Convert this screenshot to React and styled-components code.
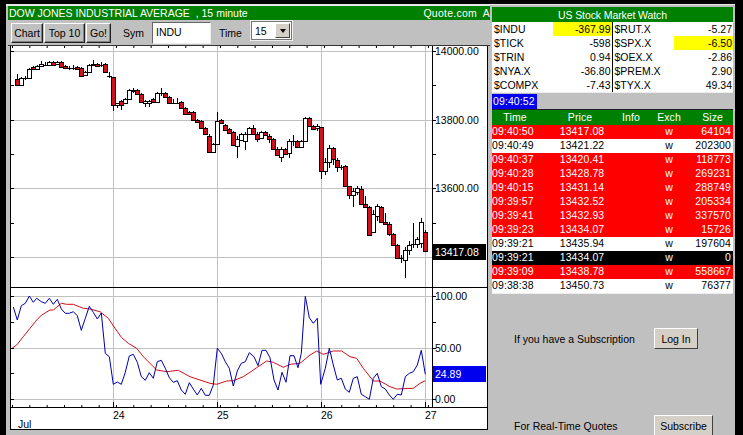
import React from "react"
import styled, { createGlobalStyle } from "styled-components"

const GlobalStyle = createGlobalStyle`
  html, body {
    margin: 0;
    padding: 0;
    background: #000;
    overflow: hidden;
  }
  * {
    box-sizing: border-box;
  }
`

const Page = styled.div`
  width: 743px;
  height: 435px;
  background: #000;
  padding: 4px 7px 0 6px;
  display: flex;
  align-items: flex-start;
  overflow: hidden;
  font-family: "Liberation Sans", Arial, sans-serif;
  font-size: 10.5px;
  color: #000;
`

const LeftColumn = styled.div`
  width: 485px;
  height: 431px;
  display: flex;
  flex-direction: column;
  background: #c0c0c0;
  border-top: 2px solid #e8e8e8;
  padding-left: 2px;
`

const TitleBar = styled.div`
  height: 14px;
  background: #008000;
  color: #fff;
  display: flex;
  justify-content: space-between;
  align-items: center;
  padding: 0 1px 0 1px;
  white-space: pre;
  line-height: 14px;
`

const TitleRight = styled.span`
  letter-spacing: 0.25px;
`

const Toolbar = styled.div`
  height: 26px;
  display: flex;
  align-items: flex-start;
  padding: 3px 0 0 3px;
  border-bottom: 1px solid #333;
`

const ToolButton = styled.button`
  width: ${props => props.$w}px;
  height: 20px;
  margin-right: 1px;
  padding: 0;
  background: #c0c0c0;
  border: 1px solid;
  border-color: #fff #222 #222 #fff;
  box-shadow: inset -1px -1px 0 #808080;
  font: 10.5px "Liberation Sans", Arial, sans-serif;
  color: #000;
`

const ToolLabel = styled.span`
  width: ${props => props.$w}px;
  padding-left: ${props => props.$left}px;
  line-height: 20px;
`

const SymbolBox = styled.div`
  width: 59px;
  height: 22px;
  margin-top: -1px;
  background: #fff;
  border: 1px solid;
  border-color: #666 #eee #eee #666;
  padding: 3px 0 0 3px;
  line-height: 13px;
`

const TimeSelect = styled.div`
  width: 41px;
  height: 19px;
  margin-top: -2px;
  background: #fff;
  border: 1px solid #777;
  outline: 1px solid #eee;
  display: flex;
  align-items: center;
  justify-content: space-between;
  padding-left: 3px;
`

const SelectArrow = styled.div`
  width: 15px;
  height: 15px;
  margin-right: 1px;
  background: #d4d0c8;
  border: 1px solid;
  border-color: #fff #444 #444 #fff;
  display: flex;
  align-items: center;
  justify-content: center;

  &::after {
    content: "";
    border: 3px solid transparent;
    border-top: 4px solid #000;
    border-bottom: 0;
  }
`

const ChartFrame = styled.div`
  width: 478px;
  height: 384px;
  margin-left: 2px;
  border: 1px solid #000;
  border-top: 0;
  background: #fff;
  display: flex;
  flex-direction: column;
`

const PriceSvg = styled.svg`
  display: block;
  width: 476px;
  height: 242px;
  border-bottom: 1px solid #000;
  flex: none;
`

const OscSvg = styled.svg`
  display: block;
  width: 476px;
  height: 141px;
  flex: none;
`

const AxisText = styled.text`
  font: 10.5px "Liberation Sans", Arial, sans-serif;
  fill: ${props => props.$fill || "#000"};
`

const RightColumn = styled.div`
  width: 245px;
  height: 431px;
  margin-left: -1px;
  display: flex;
  flex-direction: column;
  background: #c0c0c0;
  border-top: 1px solid #e8e8e8;
  padding: 2px 2px 0 2px;
`

const WatchTitle = styled.div`
  height: 15px;
  background: #008000;
  color: #fff;
  text-align: center;
  letter-spacing: -0.1px;
  line-height: 17px;
`

const WatchGrid = styled.div`
  display: grid;
  grid-template-columns: 1fr 1fr;
  background: #fff;
  border-bottom: 1px solid #eee;
`

const WatchCell = styled.div`
  height: 14px;
  display: flex;
  justify-content: space-between;
  line-height: 14px;
  border-right: ${props => (props.$divided ? "1px solid #000" : "none")};
`

const WatchName = styled.span`
  padding-left: 2px;
`

const WatchValue = styled.span`
  width: 59px;
  text-align: right;
  padding-right: 1px;
  background: ${props => (props.$hot ? "#ffff00" : "transparent")};
`

const ClockRow = styled.div`
  height: 17px;
  padding-top: 1px;
  border-bottom: 1px solid #222;
`

const Clock = styled.div`
  width: 45px;
  height: 15px;
  background: #0000ee;
  color: #fff;
  padding-left: 1px;
  line-height: 15px;
  letter-spacing: 0.1px;
`

const TradeRow = styled.div`
  display: grid;
  grid-template-columns: 46px 84px 18px 51px 42px;
  height: 14px;
  line-height: 13px;
  white-space: nowrap;
  background: ${props => props.$bg};
  color: ${props => props.$fg};
`

const HeadRow = styled(TradeRow)`
  height: 15px;
  line-height: 15px;
`

const TradeCell = styled.span`
  text-align: ${props => props.$align || "center"};
  padding-right: ${props => props.$pad || 0}px;
  padding-left: ${props => props.$lead || 0}px;
  letter-spacing: 0.1px;
`

const TradeList = styled.div`
  border-bottom: 1px solid #eee;
`

const AccessPanel = styled.div`
  display: flex;
  flex-direction: column;
  padding: 34px 0 0 22px;
`

const AccessRow = styled.div`
  display: flex;
  align-items: center;
  height: 21px;
  margin-bottom: ${props => props.$gap || 0}px;
`

const AccessText = styled.span`
  width: 140px;
  white-space: nowrap;
`

const AccessButton = styled.button`
  width: ${props => props.$w}px;
  height: 21px;
  padding: 0;
  background: #d4d0c8;
  border: 1px solid;
  border-color: #fff #404040 #404040 #fff;
  font: 10.5px "Liberation Sans", Arial, sans-serif;
  color: #000;
`

const bars = [
  [79, 85, 1, 74], [78, 85, 0], [78, 78, 0, 76, 80], [69, 78, 0], [67, 69, 1], [66, 69, 0],
  [64, 66, 0, 61], [65, 65, 0, 62], [62, 65, 0], [62, 65, 1], [62, 64, 0], [62, 67, 1],
  [66, 68, 1], [68, 68, 0, 66, 70], [68, 68, 0, 65, 70], [67, 69, 1], [68, 76, 1], [72, 75, 0],
  [65, 72, 0], [64, 65, 0, 60], [64, 66, 1], [65, 65, 0, 62, 67], [64, 72, 1], [76, 76, 0, 72, 78],
  [77, 105, 1, 77, 111], [103, 105, 0, 103, 108], [101, 105, 1, 100, 110], [99, 103, 0], [90, 99, 0], [90, 91, 0, 88, 93],
  [90, 94, 1], [94, 102, 1], [101, 103, 0, 100, 107], [101, 103, 0, 100, 107], [99, 102, 1], [93, 102, 0],
  [93, 93, 0, 88, 96], [93, 97, 1], [97, 103, 1], [103, 103, 0, 99, 104], [103, 103, 0, 98, 104], [102, 108, 1],
  [108, 114, 1], [112, 114, 1], [112, 120, 1], [120, 122, 1], [121, 128, 1], [128, 134, 1],
  [136, 152, 1, 134], [144, 152, 0], [121, 144, 0, 112], [120, 123, 1], [125, 130, 1], [129, 133, 1],
  [132, 145, 1], [139, 146, 0, 136, 158], [134, 140, 0], [134, 141, 0, 132, 150], [128, 134, 0], [128, 134, 1, 125],
  [134, 139, 1, 132, 142], [132, 138, 0], [132, 135, 1], [136, 139, 1, 134, 143], [139, 149, 1], [149, 155, 1, 147],
  [149, 157, 0, 147, 162], [149, 154, 1], [141, 153, 0, 139, 158], [141, 141, 0, 135, 146], [141, 147, 1], [141, 147, 0],
  [118, 141, 0], [118, 126, 1], [126, 129, 1], [126, 128, 0, 124, 131], [127, 171, 1, 127, 179], [162, 171, 0, 158, 175],
  [148, 162, 0, 145, 168], [148, 159, 1, 147, 165], [160, 167, 1, 158, 172], [167, 167, 0, 165, 170], [166, 186, 1], [186, 195, 1, 186, 199],
  [191, 195, 0, 188, 207], [188, 192, 0, 186, 195], [189, 204, 1, 186, 204], [204, 207, 1, 196], [207, 235, 1], [214, 232, 0, 210, 233],
  [206, 216, 0, 204, 221], [207, 222, 1], [222, 224, 1, 213], [224, 234, 1, 222, 236], [234, 245, 1], [245, 258, 1],
  [258, 258, 0, 255, 263], [250, 260, 0, 247, 278], [245, 250, 0, 241, 255], [244, 244, 0, 223, 248], [239, 244, 0, 237, 248], [222, 243, 0, 218, 248],
  [232, 251, 1, 230, 252],
]

const bluePoints = [
  [40, 66], [52, 105], [64, 62], [76, 55], [88, 33], [100, 52], [110, 40], [124, 50], [136, 55], [148, 40],
  [160, 58], [172, 43], [184, 72], [196, 85], [208, 85], [220, 80], [232, 92], [244, 136], [256, 100], [268, 64],
  [280, 82], [292, 102], [304, 84], [316, 205], [328, 215], [340, 298], [352, 291], [364, 298], [376, 262], [388, 213],
  [400, 208], [412, 232], [424, 275], [436, 286], [448, 263], [460, 280], [472, 230], [484, 226], [496, 250], [508, 278],
  [520, 292], [532, 287], [544, 315], [556, 328], [568, 293], [580, 312], [592, 330], [604, 310], [616, 331], [628, 331],
  [640, 300], [652, 190], [664, 205], [676, 230], [688, 250], [700, 303], [712, 258], [724, 235], [736, 230], [748, 203],
  [762, 215], [774, 242], [786, 196], [798, 196], [810, 218], [822, 285], [834, 315], [846, 262], [858, 292], [870, 212],
  [882, 212], [894, 248], [904, 205], [916, 34], [928, 98], [940, 115], [952, 100], [962, 298], [976, 250], [988, 190],
  [1000, 240], [1012, 285], [1024, 280], [1036, 312], [1048, 322], [1060, 280], [1072, 275], [1084, 328], [1096, 335], [1108, 343],
  [1120, 280], [1132, 265], [1144, 305], [1156, 312], [1168, 330], [1180, 343], [1192, 328], [1204, 330], [1216, 275], [1228, 265],
  [1240, 260], [1252, 240], [1264, 196], [1276, 268],
]

const redPoints = [
  [36, 190], [50, 180], [70, 155], [90, 130], [110, 105], [125, 90], [150, 75], [160, 75], [184, 55], [200, 58],
  [220, 58], [250, 70], [270, 72], [300, 80], [325, 100], [345, 130], [365, 158], [385, 175], [410, 190], [430, 215],
  [470, 255], [500, 260], [535, 256], [570, 275], [600, 285], [630, 295], [650, 298], [680, 288], [700, 287], [730, 275],
  [750, 262], [770, 248], [800, 228], [820, 232], [850, 247], [870, 238], [900, 235], [930, 210], [950, 198], [970, 208],
  [1000, 198], [1025, 198], [1050, 215], [1070, 220], [1090, 250], [1120, 288], [1140, 288], [1170, 305], [1190, 312], [1240, 310],
  [1260, 295], [1276, 287],
]

const toLine = points =>
  points.map(([x, y]) => `${(x / 3).toFixed(1)},${(285 + y / 3).toFixed(1)}`).join(" ")

const days = [113, 217, 321, 425]
const ticks = Array.from({ length: 25 }, (_, i) => 12.5 + i * 17.33)

const PriceChart = () => (
  <PriceSvg viewBox="11 46 476 241">
    {[51, 120, 188, 257].map(y => (
      <line key={y} x1="11" x2="432" y1={y + 0.5} y2={y + 0.5} stroke="#c0c0c0" />
    ))}
    {days.map(x => (
      <line key={x} x1={x + 0.5} x2={x + 0.5} y1="46" y2="287" stroke="#c0c0c0" />
    ))}
    {ticks.map(x => (
      <line key={x} x1={x} x2={x} y1="46" y2="48" stroke="#000" />
    ))}
    {[51, 85, 120, 154, 188, 223, 257].map(y => (
      <g key={y}>
        <line x1="11" x2="14" y1={y + 0.5} y2={y + 0.5} stroke="#000" />
        <line x1="432" x2="436" y1={y + 0.5} y2={y + 0.5} stroke="#000" />
      </g>
    ))}
    {bars.map(([top, bottom, red, hi, lo], i) => {
      const x = 17 + i * 4
      return (
        <g key={i}>
          <line
            x1={x + 0.5}
            x2={x + 0.5}
            y1={hi ?? top - 1}
            y2={lo ?? bottom + 1}
            stroke="#000"
          />
          {bottom > top ? (
            <rect
              x={x - 1.5}
              y={top + 0.5}
              width="4"
              height={bottom - top}
              fill={red ? "#d0101c" : "#fff"}
              stroke="#000"
            />
          ) : (
            <line x1={x - 2} x2={x + 3} y1={top + 0.5} y2={top + 0.5} stroke="#000" />
          )}
        </g>
      )
    })}
    <line x1="432.5" x2="432.5" y1="46" y2="287" stroke="#000" />
    <AxisText x="435" y="55">14000.00</AxisText>
    <AxisText x="435" y="124">13800.00</AxisText>
    <AxisText x="435" y="192">13600.00</AxisText>
    <rect x="433" y="244" width="53" height="16" fill="#000" />
    <AxisText x="435" y="256" $fill="#fff">13417.08</AxisText>
  </PriceSvg>
)

const OscChart = () => (
  <OscSvg viewBox="11 288 476 141">
    {[296, 348, 399].map(y => (
      <line key={y} x1="11" x2="432" y1={y + 0.5} y2={y + 0.5} stroke="#c0c0c0" />
    ))}
    {days.map(x => (
      <line key={x} x1={x + 0.5} x2={x + 0.5} y1="288" y2="407" stroke="#c0c0c0" />
    ))}
    <polyline points={toLine(redPoints)} fill="none" stroke="#d0101c" strokeWidth="1" />
    <polyline points={toLine(bluePoints)} fill="none" stroke="#0000a8" strokeWidth="1" />
    {[296, 322, 348, 373, 399].map(y => (
      <g key={y}>
        <line x1="11" x2="14" y1={y + 0.5} y2={y + 0.5} stroke="#000" />
        <line x1="432" x2="436" y1={y + 0.5} y2={y + 0.5} stroke="#000" />
      </g>
    ))}
    {ticks.map(x => (
      <line key={x} x1={x} x2={x} y1="405" y2="407" stroke="#000" />
    ))}
    {days.map(x => (
      <line key={x} x1={x + 0.5} x2={x + 0.5} y1="402" y2="407" stroke="#000" />
    ))}
    <line x1="11" x2="487" y1="407.5" y2="407.5" stroke="#000" />
    <line x1="432.5" x2="432.5" y1="288" y2="407" stroke="#000" />
    <AxisText x="435" y="300">100.00</AxisText>
    <AxisText x="435" y="352">50.00</AxisText>
    <AxisText x="435" y="403">0.00</AxisText>
    <rect x="433" y="366" width="53" height="16" fill="#0000ee" />
    <AxisText x="435" y="378" $fill="#fff">24.89</AxisText>
    <AxisText x="113" y="419">24</AxisText>
    <AxisText x="217" y="419">25</AxisText>
    <AxisText x="321" y="419">26</AxisText>
    <AxisText x="425" y="419">27</AxisText>
    <AxisText x="18" y="428">Jul</AxisText>
  </OscSvg>
)

const watchRows = [
  ["$INDU", "-367.99", true, "$RUT.X", "-5.27", false],
  ["$TICK", "-598", false, "$SPX.X", "-6.50", true],
  ["$TRIN", "0.94", false, "$OEX.X", "-2.86", false],
  ["$NYA.X", "-36.80", false, "$PREM.X", "2.90", false],
  ["$COMPX", "-7.43", false, "$TYX.X", "49.34", false],
]

const RED = ["#ff0000", "#fff"]
const WHITE = ["#fff", "#000"]
const BLACK = ["#000", "#fff"]

const trades = [
  ["09:40:50", "13417.08", "64104", RED],
  ["09:40:49", "13421.22", "202300", WHITE],
  ["09:40:37", "13420.41", "118773", RED],
  ["09:40:28", "13428.78", "269231", RED],
  ["09:40:15", "13431.14", "288749", RED],
  ["09:39:57", "13432.52", "205334", RED],
  ["09:39:41", "13432.93", "337570", RED],
  ["09:39:23", "13434.07", "15726", RED],
  ["09:39:21", "13435.94", "197604", WHITE],
  ["09:39:21", "13434.07", "0", BLACK],
  ["09:39:09", "13438.78", "558667", RED],
  ["09:38:38", "13450.73", "76377", WHITE],
]

const App = () => {
  return (
    <Page>
      <GlobalStyle />
      <LeftColumn>
        <TitleBar>
          <span>DOW JONES INDUSTRIAL AVERAGE  , 15 minute</span>
          <TitleRight>Quote.com  A</TitleRight>
        </TitleBar>
        <Toolbar>
          <ToolButton $w={32}>Chart</ToolButton>
          <ToolButton $w={41}>Top 10</ToolButton>
          <ToolButton $w={25}>Go!</ToolButton>
          <ToolLabel $w={40} $left={11}>Sym</ToolLabel>
          <SymbolBox>INDU</SymbolBox>
          <ToolLabel $w={40} $left={8}>Time</ToolLabel>
          <TimeSelect>
            15
            <SelectArrow />
          </TimeSelect>
        </Toolbar>
        <ChartFrame>
          <PriceChart />
          <OscChart />
        </ChartFrame>
      </LeftColumn>
      <RightColumn>
        <WatchTitle>US Stock Market Watch</WatchTitle>
        <WatchGrid>
          {watchRows.map(row => (
            <React.Fragment key={row[0]}>
              <WatchCell $divided>
                <WatchName>{row[0]}</WatchName>
                <WatchValue $hot={row[2]}>{row[1]}</WatchValue>
              </WatchCell>
              <WatchCell>
                <WatchName>{row[3]}</WatchName>
                <WatchValue $hot={row[5]}>{row[4]}</WatchValue>
              </WatchCell>
            </React.Fragment>
          ))}
        </WatchGrid>
        <ClockRow>
          <Clock>09:40:52</Clock>
        </ClockRow>
        <HeadRow $bg="#008000" $fg="#fff">
          <TradeCell>Time</TradeCell>
          <TradeCell>Price</TradeCell>
          <TradeCell>Info</TradeCell>
          <TradeCell $lead={7}>Exch</TradeCell>
          <TradeCell $align="right" $pad={10}>Size</TradeCell>
        </HeadRow>
        <TradeList>
          {trades.map(([time, price, size, colors], i) => (
            <TradeRow key={i} $bg={colors[0]} $fg={colors[1]}>
              <TradeCell $align="left">{time}</TradeCell>
              <TradeCell $lead={4}>{price}</TradeCell>
              <TradeCell />
              <TradeCell $lead={7}>w</TradeCell>
              <TradeCell $align="right" $pad={2}>{size}</TradeCell>
            </TradeRow>
          ))}
        </TradeList>
        <AccessPanel>
          <AccessRow $gap={66}>
            <AccessText>If you have a Subscription</AccessText>
            <AccessButton $w={44}>Log In</AccessButton>
          </AccessRow>
          <AccessRow>
            <AccessText>For Real-Time Quotes</AccessText>
            <AccessButton $w={59}>Subscribe</AccessButton>
          </AccessRow>
        </AccessPanel>
      </RightColumn>
    </Page>
  )
}

export default App
